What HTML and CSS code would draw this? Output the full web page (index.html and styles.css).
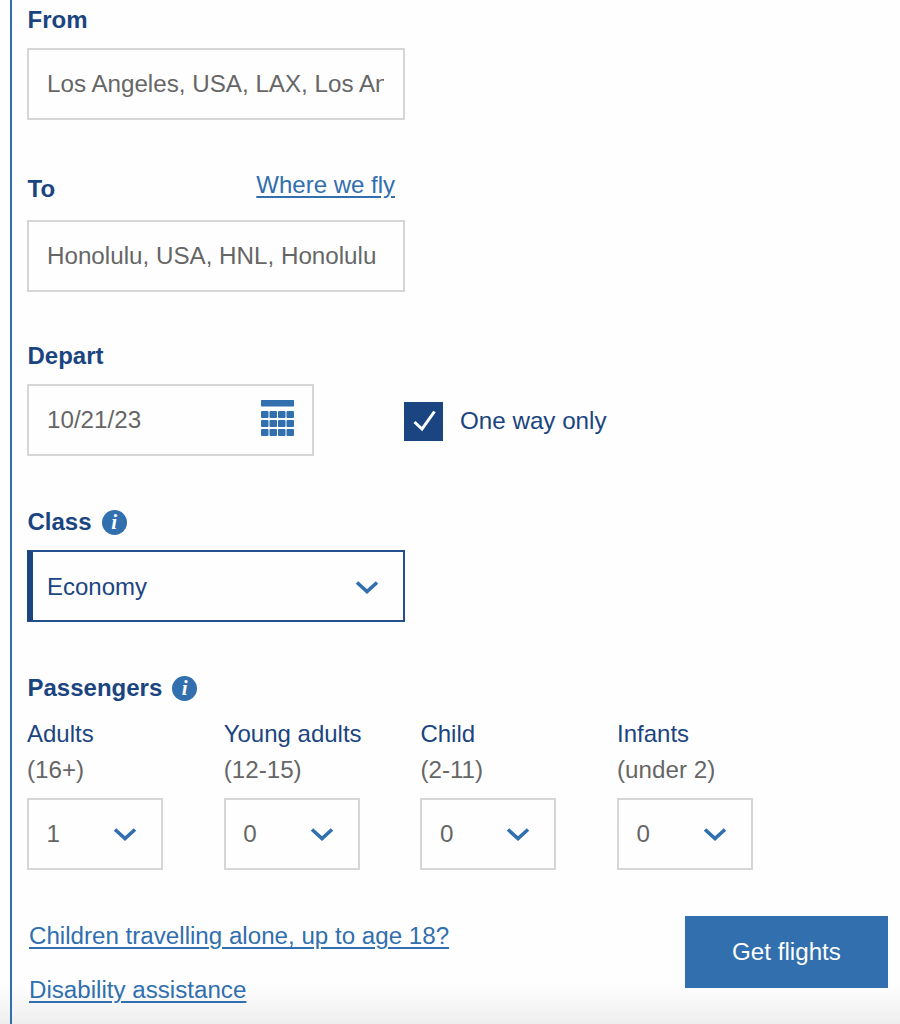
FILE: index.html
```html
<!DOCTYPE html>
<html lang="en">
<head>
    <meta charset="UTF-8">
    <meta name="viewport" content="width=device-width, initial-scale=1.0">
    <title>Book flights</title>
    <link rel="stylesheet" href="styles.css">
</head>
<body>
    <form class="booking">
        <!-- From -->
        <div class="field field-from">
            <label class="label" for="from">From</label>
            <input class="input" id="from" type="text" value="Los Angeles, USA, LAX, Los Angeles International" readonly>
        </div>

        <!-- To -->
        <div class="field field-to">
            <div class="label-row">
                <label class="label" for="to">To</label>
                <a class="link" href="#">Where we fly</a>
            </div>
            <input class="input" id="to" type="text" value="Honolulu, USA, HNL, Honolulu International" readonly>
        </div>

        <!-- Depart -->
        <div class="field field-depart">
            <label class="label" for="depart">Depart</label>
            <div class="depart-row">
                <div class="date-box">
                    <span class="date-value" id="depart">10/21/23</span>
                    <svg class="calendar" width="33" height="36" viewBox="0 0 33 36" aria-hidden="true">
                        <rect x="0" y="0" width="33" height="6.5" rx="0.5"/>
                        <rect x="0" y="11" width="7.500" height="7" rx="1"/>
                        <rect x="8.500" y="11" width="7.500" height="7" rx="1"/>
                        <rect x="17" y="11" width="7.500" height="7" rx="1"/>
                        <rect x="25.500" y="11" width="7.500" height="7" rx="1"/>
                        <rect x="0" y="20" width="7.500" height="7" rx="1"/>
                        <rect x="8.500" y="20" width="7.500" height="7" rx="1"/>
                        <rect x="17" y="20" width="7.500" height="7" rx="1"/>
                        <rect x="25.500" y="20" width="7.500" height="7" rx="1"/>
                        <rect x="0" y="29" width="7.500" height="7" rx="1"/>
                        <rect x="8.500" y="29" width="7.500" height="7" rx="1"/>
                        <rect x="17" y="29" width="7.500" height="7" rx="1"/>
                        <rect x="25.500" y="29" width="7.500" height="7" rx="1"/>
                    </svg>
                </div>
                <div class="one-way">
                    <span class="checkbox">
                        <svg width="39" height="39" viewBox="0 0 39 39" aria-hidden="true">
                            <path d="M10.500 20l7.500 7L30.500 9.500" fill="none" stroke="#fff" stroke-width="3"/>
                        </svg>
                    </span>
                    <span class="one-way-text">One way only</span>
                </div>
            </div>
        </div>

        <!-- Class -->
        <div class="field field-class">
            <div class="label-info">
                <span class="label">Class</span>
                <span class="info">i</span>
            </div>
            <div class="class-select">
                <span>Economy</span>
                <svg class="chevron" width="24" height="14" viewBox="0 0 24 14" aria-hidden="true">
                    <path d="M2 2.500l10 9 10-9" fill="none" stroke="#316fae" stroke-width="3.600"/>
                </svg>
            </div>
        </div>

        <!-- Passengers -->
        <div class="field field-passengers">
            <div class="label-info">
                <span class="label">Passengers</span>
                <span class="info">i</span>
            </div>
            <div class="passenger-grid">
                <div class="passenger">
                    <div class="passenger-name">Adults</div>
                    <div class="passenger-age">(16+)</div>
                    <div class="count-select">
                        <span>1</span>
                        <svg class="chevron" width="24" height="14" viewBox="0 0 24 14" aria-hidden="true"><path d="M2 2.500l10 9 10-9" fill="none" stroke="#316fae" stroke-width="3.600"/></svg>
                    </div>
                </div>
                <div class="passenger">
                    <div class="passenger-name">Young adults</div>
                    <div class="passenger-age">(12-15)</div>
                    <div class="count-select">
                        <span>0</span>
                        <svg class="chevron" width="24" height="14" viewBox="0 0 24 14" aria-hidden="true"><path d="M2 2.500l10 9 10-9" fill="none" stroke="#316fae" stroke-width="3.600"/></svg>
                    </div>
                </div>
                <div class="passenger">
                    <div class="passenger-name">Child</div>
                    <div class="passenger-age">(2-11)</div>
                    <div class="count-select">
                        <span>0</span>
                        <svg class="chevron" width="24" height="14" viewBox="0 0 24 14" aria-hidden="true"><path d="M2 2.500l10 9 10-9" fill="none" stroke="#316fae" stroke-width="3.600"/></svg>
                    </div>
                </div>
                <div class="passenger">
                    <div class="passenger-name">Infants</div>
                    <div class="passenger-age">(under 2)</div>
                    <div class="count-select">
                        <span>0</span>
                        <svg class="chevron" width="24" height="14" viewBox="0 0 24 14" aria-hidden="true"><path d="M2 2.500l10 9 10-9" fill="none" stroke="#316fae" stroke-width="3.600"/></svg>
                    </div>
                </div>
            </div>
        </div>

        <!-- Links and submit -->
        <div class="footer-row">
            <div class="footer-links">
                <a class="link" href="#">Children travelling alone, up to age 18?</a>
                <a class="link" href="#">Disability assistance</a>
            </div>
            <button class="btn" type="button">Get flights</button>
        </div>
    </form>
</body>
</html>
```

FILE: styles.css
```css
html, body {
    height: 100%;
}
body {
    margin: 0;
    overflow: hidden;
    font-family: "Liberation Sans", Arial, sans-serif;
    font-size: 24.2px;
    color: #1b4580;
    background: linear-gradient(to bottom, #fefefe 0, #fefefe 985px, #eeeeee 1024px);
}
.booking {
    box-sizing: border-box;
    height: 1024px;
    margin-left: 10px;
    padding-left: 15px;
    border-left: 2px solid #316fae;
}
.label {
    display: block;
    padding-left: 0.5px;
    font-weight: bold;
    font-size: 24px;
    line-height: 28px;
    color: #1b4580;
}
.label-row {
    display: flex;
    justify-content: space-between;
    width: 368px;
    margin-bottom: 17px;
}
.label-row .label {
    padding-top: 4px;
}
.label-row .link {
    font-size: 24px;
    line-height: 28px;
}
.link {
    color: #316fae;
    text-decoration: underline;
    text-underline-offset: 3px;
    font-size: 24.15px;
}
.input {
    display: block;
    box-sizing: border-box;
    width: 378px;
    height: 72px;
    padding: 0 19px 0 18px;
    border: 2px solid #d6d6d6;
    border-radius: 0;
    outline: none;
    background: #fefefe;
    font-family: inherit;
    font-size: 24.2px;
    color: #666666;
}
.field-from {
    padding-top: 6px;
}
.field-from .label {
    margin-bottom: 14px;
}
.field-to {
    padding-top: 51px;
}
.field-depart {
    padding-top: 50px;
}
.field-depart .label {
    margin-bottom: 14px;
}
.depart-row {
    display: flex;
    align-items: center;
}
.date-box {
    box-sizing: border-box;
    display: flex;
    align-items: center;
    justify-content: space-between;
    width: 287px;
    height: 72px;
    padding: 0 18px;
    border: 2px solid #d6d6d6;
    color: #666666;
}
.calendar {
    margin-bottom: 4px;
    fill: #316fae;
}
.one-way {
    display: flex;
    align-items: center;
    margin-left: 90px;
    margin-top: 2px;
    gap: 17px;
}
.checkbox {
    display: block;
    width: 39px;
    height: 39px;
    background: #1b4580;
}
.checkbox svg {
    display: block;
}
.field-class {
    padding-top: 52px;
}
.label-info {
    display: flex;
    align-items: center;
    gap: 10px;
    height: 28px;
}
.info {
    display: flex;
    align-items: center;
    justify-content: center;
    width: 25px;
    height: 25px;
    border-radius: 50%;
    background: #316fae;
    color: #ffffff;
    font-family: "Liberation Serif", serif;
    font-style: italic;
    font-weight: bold;
    font-size: 21px;
}
.class-select {
    box-sizing: border-box;
    display: flex;
    align-items: center;
    justify-content: space-between;
    width: 378px;
    height: 72px;
    margin-top: 14px;
    padding: 1px 24px 0 14px;
    border: 2px solid #24508c;
    border-left: 6px solid #1b4580;
    font-size: 24px;
    color: #1b4580;
}
.field-passengers {
    padding-top: 52px;
}
.passenger-grid {
    display: grid;
    grid-template-columns: repeat(4, 136px);
    column-gap: 60.700px;
    margin-top: 18px;
    white-space: nowrap;
}
.passenger-name {
    line-height: 28px;
    font-size: 24px;
    color: #1b4580;
}
.passenger-age {
    margin-top: 8px;
    line-height: 28px;
    color: #666666;
}
.count-select {
    box-sizing: border-box;
    display: flex;
    align-items: center;
    justify-content: space-between;
    height: 72px;
    margin-top: 14px;
    padding: 0 24px 0 17.500px;
    border: 2px solid #d6d6d6;
    color: #666666;
}
.footer-row {
    display: flex;
    justify-content: space-between;
    width: 861px;
    margin-top: 46px;
}
.footer-links {
    display: flex;
    flex-direction: column;
    align-items: flex-start;
    gap: 27px;
    padding-left: 2px;
    padding-top: 6px;
    line-height: 27px;
}
.btn {
    width: 203px;
    height: 72px;
    border: none;
    background-color: #316fae;
    color: #ffffff;
    font-family: inherit;
    font-size: 24.2px;
}
```
